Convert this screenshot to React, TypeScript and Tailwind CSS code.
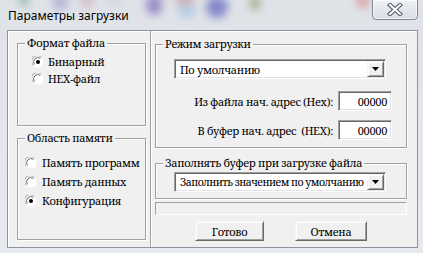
import React from "react";

const sunken =
  "border border-t-[#a0a0a0] border-l-[#a0a0a0] border-r-white border-b-white shadow-[inset_1px_1px_0_#696969,inset_-1px_-1px_0_#e3e3e3]";
const raised =
  "border border-t-[#f4f4f4] border-l-[#f4f4f4] border-r-[#696969] border-b-[#696969] shadow-[inset_1px_1px_0_#ffffff,inset_-1px_-1px_0_#a0a0a0] bg-[#f0f0f0]";

function Group({
  label,
  className,
  children,
}: {
  label: string;
  className?: string;
  children?: React.ReactNode;
}) {
  return (
    <div
      className={`relative border border-[#a0a0a0] shadow-[inset_1px_1px_0_#ffffff,1px_1px_0_#ffffff] ${className ?? ""}`}
    >
      <span className="absolute left-[7px] -top-[9px] bg-[#f0f0f0] px-[2px] leading-[16px] whitespace-nowrap">
        {label}
      </span>
      {children}
    </div>
  );
}

function Radio({ checked }: { checked?: boolean }) {
  return (
    <svg width="12" height="12" viewBox="0 0 12 12" className="shrink-0">
      <circle cx="6" cy="6" r="5.5" fill="#ffffff" />
      <path d="M1.2 9.2 A5.5 5.5 0 0 1 9.2 1.2" fill="none" stroke="#a0a0a0" strokeWidth="1" />
      <path d="M2.4 8.4 A4.3 4.3 0 0 1 8.4 2.4" fill="none" stroke="#696969" strokeWidth="1" />
      <path d="M10.8 2.8 A5.5 5.5 0 0 1 2.8 10.8" fill="none" stroke="#f4f4f4" strokeWidth="1" />
      {checked && <circle cx="6" cy="6" r="2" fill="#000000" />}
    </svg>
  );
}

function Combo({ text, textClass }: { text: string; textClass?: string }) {
  return (
    <div className={`w-[212px] h-[20px] bg-white flex items-stretch ${sunken} p-[1px]`}>
      <div className={`flex-1 pl-[4px] flex items-center leading-none whitespace-nowrap overflow-hidden ${textClass ?? ""}`}>
        {text}
      </div>
      <div className={`w-[17px] shrink-0 flex items-center justify-center ${raised}`}>
        <svg width="7" height="4" viewBox="0 0 7 4">
          <path d="M0 0 H7 L3.5 4 Z" fill="#000000" />
        </svg>
      </div>
    </div>
  );
}

function Field({ value }: { value: string }) {
  return (
    <div className={`w-[54px] h-[20px] bg-white ${sunken} flex items-center justify-end pr-[4px] leading-none`}>
      {value}
    </div>
  );
}

function Button({ label, w }: { label: string; w: string }) {
  return (
    <div className={`${w} h-[20px] ${raised} flex items-center justify-center leading-none`}>
      {label}
    </div>
  );
}

export default function App() {
  return (
    <div className="relative w-[423px] h-[253px] overflow-hidden bg-gradient-to-b from-[#dfe3e8] to-[#e6e9ed] font-['Noto_Serif',serif] text-[11px] tracking-[-0.3px] text-black">
      {/* blurred background seen through the glass title bar */}
      <div className="absolute inset-x-0 top-0 h-[28px] overflow-hidden pointer-events-none">
        <div className="absolute left-[18px] -top-[6px] w-[12px] h-[12px] rounded-full bg-[#7fa89e] blur-[4px] opacity-70" />
        <div className="absolute left-[52px] -top-[6px] w-[16px] h-[16px] rounded-full bg-[#9d8fcc] blur-[4px] opacity-60" />
        <div className="absolute left-[80px] -top-[6px] w-[14px] h-[14px] rounded-full bg-[#c79aa6] blur-[4px] opacity-50" />
        <div className="absolute left-[110px] -top-[6px] w-[10px] h-[12px] rounded-full bg-[#b7aad4] blur-[4px] opacity-40" />
        <div className="absolute left-[146px] -top-[5px] w-[16px] h-[20px] rounded-full bg-[#8a78bf] blur-[4px] opacity-80" />
        <div className="absolute left-[176px] -top-[6px] w-[18px] h-[12px] rounded-full bg-[#c77f8a] blur-[4px] opacity-60" />
        <div className="absolute left-[178px] top-[5px] w-[18px] h-[12px] rounded-full bg-[#9fc3e6] blur-[4px] opacity-70" />
        <div className="absolute left-[206px] -top-[4px] w-[22px] h-[22px] rounded-full bg-[#6f72c2] blur-[4px] opacity-80" />
        <div className="absolute left-[250px] -top-[4px] w-[10px] h-[14px] rounded-full bg-[#8a9160] blur-[4px] opacity-70" />
        <div className="absolute left-[356px] -top-[6px] w-[14px] h-[14px] rounded-full bg-[#e07878] blur-[4px] opacity-60" />
      </div>

      {/* close button */}
      <div className="absolute left-[372px] -top-[1px] w-[46px] h-[21px] rounded-b-[4px] border border-[#7d8896] bg-gradient-to-b from-[#eef1f5] to-[#d9dee5] shadow-[inset_0_0_0_1px_rgba(255,255,255,0.7)] flex items-center justify-center">
        <svg width="16" height="13" viewBox="0 0 16 13">
          <path d="M3 2 L13 11 M13 2 L3 11" stroke="#4b5563" strokeWidth="4.2" strokeLinecap="square" />
          <path d="M3 2 L13 11 M13 2 L3 11" stroke="#ffffff" strokeWidth="2.2" strokeLinecap="square" />
        </svg>
      </div>

      <div className="relative flex flex-col h-full">
        {/* title */}
        <div className="h-[30px] flex items-center pl-[8px] pt-[2px] font-['Noto_Sans',sans-serif] text-[12px] tracking-normal text-black">
          Параметры загрузки
        </div>

        {/* client area */}
        <div className="ml-[7px] w-[411px] h-[218px] bg-[#f0f0f0] border border-[#8b95a2] shadow-[inset_1px_1px_0_#ffffff] flex">
          {/* left column */}
          <div className="w-[143px] border-r border-[#a0a0a0] pt-[12px] pl-[9px] flex flex-col">
            <Group label="Формат файла" className="w-[129px] h-[83px]">
              <div className="pt-[9px] pl-[14px] flex flex-col">
                <div className="h-[17px] flex items-center gap-[4px]">
                  <Radio checked />
                  <span className="leading-none">Бинарный</span>
                </div>
                <div className="h-[17px] flex items-center gap-[4px]">
                  <Radio />
                  <span className="leading-none">HEX-файл</span>
                </div>
              </div>
            </Group>
            <Group label="Область памяти" className="mt-[12px] w-[129px] h-[102px]">
              <div className="pt-[14px] pl-[7px] flex flex-col">
                <div className="h-[19px] flex items-center gap-[5px]">
                  <Radio />
                  <span className="leading-none whitespace-nowrap">Память программ</span>
                </div>
                <div className="h-[19px] flex items-center gap-[5px]">
                  <Radio />
                  <span className="leading-none whitespace-nowrap">Память данных</span>
                </div>
                <div className="h-[19px] flex items-center gap-[5px]">
                  <Radio checked />
                  <span className="leading-none whitespace-nowrap">Конфигурация</span>
                </div>
              </div>
            </Group>
          </div>

          {/* right column */}
          <div className="flex-1 shadow-[inset_1px_0_0_#ffffff] pt-[13px] pl-[4px] flex flex-col">
            <Group label="Режим загрузки" className="w-[252px] h-[104px]">
              <div className="pt-[14px] pl-[18px] pr-[14px] flex flex-col">
                <Combo text="По умолчанию" />
                <div className="mt-[12px] flex items-center justify-end gap-[5px]">
                  <span className="leading-none whitespace-pre">Из файла нач. адрес (Hex):</span>
                  <Field value="00000" />
                </div>
                <div className="mt-[9px] flex items-center justify-end gap-[5px]">
                  <span className="leading-none whitespace-pre">В буфер нач. адрес  (HEX):</span>
                  <Field value="00000" />
                </div>
              </div>
            </Group>
            <Group label="Заполнять буфер при загрузке файла" className="mt-[15px] w-[252px] h-[36px]">
              <div className="pt-[8px] pl-[18px]">
                <Combo
                  text="Заполнить значением по умолчанию"
                  textClass="text-[10.5px] tracking-[-0.5px] pl-[3px]"
                />
              </div>
            </Group>
            <div className="mt-[3px] w-[252px] h-[13px] border border-t-[#a0a0a0] border-l-[#a0a0a0] border-r-white border-b-white" />
            <div className="mt-[6px] pl-[40px] flex gap-[31px]">
              <Button label="Готово" w="w-[69px]" />
              <Button label="Отмена" w="w-[72px]" />
            </div>
          </div>
        </div>
      </div>
    </div>
  );
}
